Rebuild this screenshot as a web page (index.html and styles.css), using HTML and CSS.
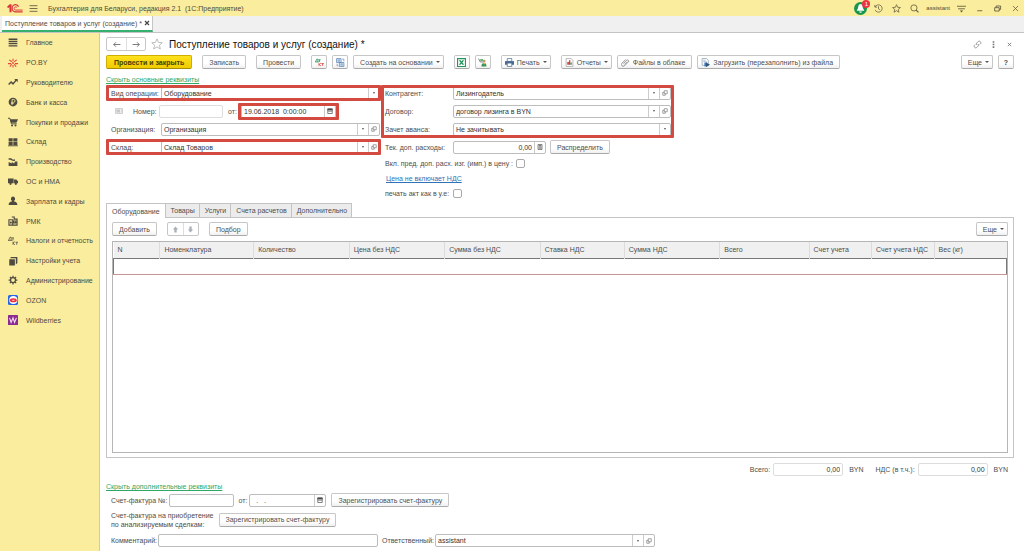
FILE: index.html
```
<!DOCTYPE html>
<html lang="ru">
<head>
  <meta charset="UTF-8" />
  <meta name="viewport" content="width=device-width, initial-scale=1.0" />
  <title>Поступление товаров и услуг (создание)</title>
  <link rel="stylesheet" href="styles.css">
</head>
<body>
  <!-- shared icons -->
  <svg class="sprite" aria-hidden="true">
    <symbol id="open" viewBox="0 0 12 12"><path d="M4.500 1.500h6v6h-6zM4.500 4.500H1.500v6h5V7.500" fill="none" stroke="currentColor" stroke-width="1"/></symbol>
    <symbol id="calendar" viewBox="0 0 12 12"><path d="M1.500 2h9v9h-9z" fill="none" stroke="currentColor" stroke-width="1.400"/><path d="M1 1h10v4H1zM3 6.500h1.500V8H3zM5.300 6.500h1.500V8H5.300zM7.600 6.500h1.500V8H7.600z" fill="currentColor"/></symbol>
    <symbol id="calc" viewBox="0 0 12 12"><path d="M2 1h8v10H2z" fill="none" stroke="currentColor" stroke-width="1.300"/><path d="M3.500 2.500h5V5h-5zM3.500 6h1.300v1.300H3.500zM5.500 6h1.300v1.300H5.500zM7.400 6h1.300v1.300H7.400zM3.500 8.200h1.300v1.300H3.500zM5.500 8.200h1.300v1.300H5.500zM7.400 8.200h1.300v1.300H7.400z" fill="currentColor"/></symbol>
  </svg>

  <header class="topbar">
    <svg class="logo" viewBox="0 0 46 26" aria-label="1С">
      <path d="M0 8l8-7h5v23H7V9l-4 3z" fill="#d9363a"/>
      <path d="M33 8c-1-4-5-6-8-6a10 10 0 0 0 0 21h20" fill="none" stroke="#d9363a" stroke-width="3.600"/>
      <path d="M28.500 10a4.500 4.500 0 1 0-3.500 7.500h20" fill="none" stroke="#d9363a" stroke-width="2.800"/>
    </svg>
    <button class="plain" aria-label="Меню"><svg class="ico" viewBox="0 0 16 16"><path d="M1 3h14M1 8h14M1 13h14" stroke="#5d563a" stroke-width="1.500"/></svg></button>
    <span class="app-name">Бухгалтерия для Беларуси, редакция 2.1 &nbsp;(1С:Предприятие)</span>
    <div class="top-tools">
      <button class="plain bell" aria-label="Уведомления"><svg viewBox="0 0 24 24"><circle cx="12" cy="12" r="12" fill="#18964d"/><path d="M12 4c-4 0-4 4-4.500 7L5 16h14l-2.500-5C16 8 16 4 12 4zM9.500 17.500h5a2.500 2.500 0 0 1-5 0z" fill="#fff"/></svg><span class="badge">1</span></button>
      <button class="plain" aria-label="История"><svg class="ico" viewBox="0 0 16 16"><path d="M2.200 5A6.500 6.500 0 1 1 2 10.500M1.500 1.500V5.500h4M8 4v4.500l3 2" fill="none" stroke="#5d563a" stroke-width="1.300"/></svg></button>
      <button class="plain" aria-label="Избранное"><svg class="ico" viewBox="0 0 16 16"><path d="M8 1.200l2 4.700 5 .4-3.800 3.300 1.200 5L8 11.900l-4.400 2.700 1.200-5L1 6.300l5-.4z" fill="none" stroke="#5d563a" stroke-width="1.300"/></svg></button>
      <button class="plain" aria-label="Поиск"><svg class="ico" viewBox="0 0 16 16"><circle cx="7" cy="7" r="5.500" fill="none" stroke="#5d563a" stroke-width="1.400"/><path d="M11 11l4 4" stroke="#5d563a" stroke-width="1.800"/></svg></button>
      <span class="user">assistant</span>
      <button class="plain" aria-label="Настройки"><svg class="ico" viewBox="0 0 16 16"><path d="M0 4h16M2 8.500h12" stroke="#5d563a" stroke-width="1.500"/><path d="M5 11.500h6L8 15z" fill="#5d563a"/></svg></button>
      <button class="plain" aria-label="Свернуть"><svg class="ico" viewBox="0 0 16 16"><path d="M4 12h9" stroke="#5d563a" stroke-width="1.500"/></svg></button>
      <button class="plain" aria-label="Развернуть"><svg class="ico" viewBox="0 0 16 16"><path d="M3 6.500h8v6H3zM5.500 6V3.500h8v6H11" fill="none" stroke="#5d563a" stroke-width="1.500"/></svg></button>
      <button class="plain" aria-label="Закрыть"><svg class="ico" viewBox="0 0 16 16"><path d="M3.500 3.500l9 9M12.500 3.500l-9 9" stroke="#5d563a" stroke-width="1.300"/></svg></button>
    </div>
  </header>

  <div class="window-tabs">
    <div class="window-tab">
      <span>Поступление товаров и услуг (создание) *</span>
      <button class="plain" aria-label="Закрыть вкладку"><svg viewBox="0 0 8 8"><path d="M2 2l4 4M6 2L2 6" stroke="#444" stroke-width="1.200"/></svg></button>
    </div>
  </div>

  <div class="workspace">
    <nav class="sidebar">
      <ul>
        <li><a href="#"><svg viewBox="0 0 16 16"><path d="M1 2h14M1 5.500h14M1 9h14M1 12.500h14" stroke="#4d4a40" stroke-width="2.200"/></svg>Главное</a></li>
        <li><a href="#"><svg viewBox="0 0 16 16"><path d="M8 1v4M8 11v4M2 3l4 3M14 3l-4 3M0 9h5M11 9h5M3 14l3-4M13 14l-3-4" stroke="#e0453a" stroke-width="1.700"/><circle cx="8" cy="8" r="1.500" fill="#e0453a"/></svg>PO.BY</a></li>
        <li><a href="#"><svg viewBox="0 0 16 16"><path d="M1 12l4-4 3 3 5-6" fill="none" stroke="#4d4a40" stroke-width="2.300"/><path d="M10 3h5.500v5.500z" fill="#4d4a40"/></svg>Руководителю</a></li>
        <li><a href="#"><svg viewBox="0 0 16 16"><circle cx="8" cy="8" r="7" fill="#4d4a40"/><path d="M6.500 13V4h2.500a2.200 2.200 0 0 1 0 4.500H5M5 10.500h4" fill="none" stroke="#fbed9e" stroke-width="1.300"/></svg>Банк и касса</a></li>
        <li><a href="#"><svg viewBox="0 0 16 16"><path d="M0 2h3l2.500 9H14" fill="none" stroke="#4d4a40" stroke-width="1.600"/><path d="M3.500 3.500H16L13.500 9H5z" fill="#4d4a40"/><circle cx="6.500" cy="13.500" r="1.600" fill="#4d4a40"/><circle cx="12" cy="13.500" r="1.600" fill="#4d4a40"/></svg>Покупки и продажи</a></li>
        <li><a href="#"><svg viewBox="0 0 16 16"><path d="M1 2h6.500v5H1zM8.500 2H15v5H8.500zM1 8h6.500v5H1zM8.500 8H15v5H8.500zM0 13.500h16v1.200H0z" fill="#4d4a40"/></svg>Склад</a></li>
        <li><a href="#"><svg viewBox="0 0 16 16"><path d="M1 14.500V8l5 2.500V8l4 2.500L11 7h4v7.500zM1 2h4l3 2.500 3-1v3L7 6 4 4.500H1z" fill="#4d4a40"/></svg>Производство</a></li>
        <li><a href="#"><svg viewBox="0 0 16 16"><path d="M0 4h9v7.500H0zM9.700 5.500h3.500L16 8.500v3H9.700z" fill="#4d4a40"/><circle cx="4" cy="12.500" r="1.800" fill="#4d4a40"/><circle cx="12.500" cy="12.500" r="1.800" fill="#4d4a40"/></svg>ОС и НМА</a></li>
        <li><a href="#"><svg viewBox="0 0 16 16"><path d="M8 1a3.200 3.500 0 0 1 1.800 6.500v1.300c3 .7 5.200 1.500 5.200 5.700H1c0-4.200 2.200-5 5.200-5.700V7.500A3.200 3.500 0 0 1 8 1z" fill="#4d4a40"/></svg>Зарплата и кадры</a></li>
        <li><a href="#"><svg viewBox="0 0 16 16"><path d="M1.500 6h6v8.500h-6zM6 1.500h4V6M9 5h5.500v9.500H7.500M9 8h3.500v3H9z" fill="none" stroke="#4d4a40" stroke-width="1.800"/><path d="M3 9h3v3H3z" fill="#4d4a40"/></svg>РМК</a></li>
        <li><a href="#"><svg viewBox="0 0 16 16"><path d="M1 7l2-5h2v5M0 7h7M6 3h3.500M8 3v4M8 9v5M11 9l-3 2.500L11 14M12 10h4M14 10v4" fill="none" stroke="#4d4a40" stroke-width="1.200"/></svg>Налоги и отчетность</a></li>
        <li><a href="#"><svg viewBox="0 0 16 16"><path d="M2 5h9v10H2zM3 3.500L5 1.500h10V11l-2.500 2.500v-10z" fill="#4d4a40"/></svg>Настройки учета</a></li>
        <li><a href="#"><svg viewBox="0 0 16 16"><circle cx="8" cy="8" r="4" fill="none" stroke="#4d4a40" stroke-width="2"/><path d="M8 1v3M8 12v3M1 8h3M12 8h3M3 3l2 2M11 11l2 2M13 3l-2 2M5 11l-2 2" stroke="#4d4a40" stroke-width="2"/></svg>Администрирование</a></li>
        <li><a href="#"><svg viewBox="0 0 16 16"><rect width="16" height="16" rx="2.500" fill="#2566e8"/><circle cx="8.500" cy="8" r="6.500" fill="#fff"/><ellipse cx="8.500" cy="8.500" rx="5.500" ry="3.200" fill="#ee2b3b"/><path d="M6.500 8.500h4" stroke="#fff" stroke-width="1.200"/></svg>OZON</a></li>
        <li><a href="#"><svg viewBox="0 0 16 16"><rect width="16" height="16" rx="1" fill="#8b2a8f"/><path d="M2.500 4.500L5 12l3-7.500 2.500 7.500 3-7.500" fill="none" stroke="#f3dcf3" stroke-width="1.700"/></svg>Wildberries</a></li>
      </ul>
    </nav>

    <main>
      <div class="title-row">
        <div class="pair">
          <button aria-label="Назад"><svg viewBox="0 0 16 12"><path d="M15 6H3M7 2L3 6l4 4" fill="none" stroke="#777" stroke-width="1.700"/></svg></button>
          <button aria-label="Вперед"><svg viewBox="0 0 16 12"><path d="M1 6h12M9 2l4 4-4 4" fill="none" stroke="#777" stroke-width="1.700"/></svg></button>
        </div>
        <svg class="star" viewBox="0 0 16 16"><path d="M8 1.200l2 4.700 5 .4-3.800 3.300 1.200 5L8 11.900l-4.400 2.700 1.200-5L1 6.300l5-.4z" fill="none" stroke="#aaa" stroke-width="1"/></svg>
        <h1>Поступление товаров и услуг (создание) *</h1>
        <div class="title-tools">
          <button class="plain" aria-label="Ссылка"><svg class="ico" viewBox="0 0 16 16"><path d="M7 9a3 3 0 0 1 0-4l2.500-2.500a2.900 2.900 0 0 1 4 4L12 8M9 7a3 3 0 0 1 0 4l-2.500 2.500a2.900 2.900 0 0 1-4-4L4 8" fill="none" stroke="#777" stroke-width="1.300"/></svg></button>
          <button class="plain" aria-label="Действия"><svg class="ico" viewBox="0 0 16 16"><path d="M6.500 2h3v3h-3zM6.500 6.500h3v3h-3zM6.500 11h3v3h-3z" fill="#777"/></svg></button>
          <button class="plain" aria-label="Закрыть"><svg class="ico" viewBox="0 0 16 16"><path d="M5 5l6 6M11 5l-6 6" stroke="#777" stroke-width="1.500"/></svg></button>
        </div>
      </div>

      <div class="commands">
        <button class="btn primary">Провести и закрыть</button>
        <button class="btn">Записать</button>
        <button class="btn">Провести</button>
        <div class="group">
          <button class="btn icon" aria-label="Проводки"><svg viewBox="0 0 16 16"><path d="M1 7l2-5h2v5M0 7h7M6 3h4M8 3v4" fill="none" stroke="#25915a" stroke-width="1.400"/><path d="M7 9v5M10.500 9L7.500 11.500l3 2.500M11 10h5M13.500 10v4" fill="none" stroke="#d9413a" stroke-width="1.400"/></svg></button>
          <button class="btn icon" aria-label="Структура подчиненности"><svg viewBox="0 0 16 16"><path d="M1 1h8v7H1zM6 8h8v7H6z" fill="#dce8f5" stroke="#5b83b5" stroke-width="1.300"/><path d="M3 3.500h4M3 5.500h4M8 10.500h4M8 12.500h4M11 2h3v4M2 10v4h2" fill="none" stroke="#5b83b5" stroke-width="1.200"/></svg></button>
          <button class="btn">Создать на основании<i class="caret"></i></button>
        </div>
        <div class="group">
          <button class="btn icon" aria-label="Excel"><svg viewBox="0 0 16 16"><path d="M1 1h14v14H1z" fill="#fff" stroke="#23945a" stroke-width="2"/><path d="M4.500 4l7 8M11.500 4l-7 8" stroke="#23945a" stroke-width="2.200"/></svg></button>
          <button class="btn icon" aria-label="Подбор контрагента"><svg viewBox="0 0 16 16"><path d="M1 1l3 6h7" fill="none" stroke="#555" stroke-width="1.300"/><path d="M4 2h5v3H4z" fill="#4aa564"/><circle cx="11" cy="5.500" r="2.500" fill="#c79a5b"/><path d="M6 15c0-4 2-6 5-6s4 2 4 6z" fill="#35965a"/><path d="M9 9l2 3 2-3z" fill="#e2b94f"/></svg></button>
        </div>
        <button class="btn"><svg viewBox="0 0 16 16"><path d="M4 1h8v5H4z" fill="#fff" stroke="#4a6a93" stroke-width="1.300"/><path d="M0 5.500h16V12H0z" fill="#4a6a93"/><path d="M4 9h8v6H4z" fill="#fff" stroke="#4a6a93" stroke-width="1.300"/></svg>Печать<i class="caret"></i></button>
        <div class="group">
          <button class="btn"><svg viewBox="0 0 16 16"><path d="M2 1h9l3 3v11H2z" fill="#fff" stroke="#999" stroke-width="1.200"/><path d="M4 7h3v5H4z" fill="#d9413a"/><path d="M7 4h2.500v8H7z" fill="#d9413a"/><path d="M9.500 8h2.500v4H9.500z" fill="#23945a"/></svg>Отчеты<i class="caret"></i></button>
          <button class="btn"><svg viewBox="0 0 16 16"><path d="M4 10l6-6a2 2 0 0 1 3 3l-7 7a3.200 3.200 0 0 1-4.500-4.500L8.500 2.500M6 11.500l5-5" fill="none" stroke="#777" stroke-width="1.300"/></svg>Файлы в облаке</button>
          <button class="btn"><svg viewBox="0 0 16 16"><path d="M2 1h8l3 3v9H2z" fill="#fff" stroke="#7d93ad" stroke-width="1.200"/><path d="M4 4h4M4 6.500h6" stroke="#7d93ad"/><path d="M6 8h5v7H6z" fill="#3979bd"/><path d="M9 8l7 4-7 4z" fill="#31547d"/></svg>Загрузить (перезаполнить) из файла</button>
        </div>
        <div class="group end">
          <button class="btn more">Еще<i class="caret"></i></button>
          <button class="btn icon help">?</button>
        </div>
      </div>

      <a href="#" class="toggle">Скрыть основные реквизиты</a>

      <div class="form">
        <div class="col">
          <div class="row marked">
            <label for="op">Вид операции:</label>
            <div class="field grow"><input id="op" type="text" value="Оборудование"><button aria-label="Выбрать"><i class="caret"></i></button></div>
          </div>
          <div class="row number-row">
            <svg class="note" viewBox="0 0 16 12"><path d="M1 1h14v10H1z" fill="#eee" stroke="#aaa"/><path d="M3 4h7M3 6h7M3 8h7M12 4h1M12 6h1M12 8h1" stroke="#999"/></svg>
            <label for="num">Номер:</label>
            <div class="field soft grow"><input id="num" type="text"></div>
            <label for="date">от:</label>
            <div class="marked date-mark">
              <div class="field"><input id="date" type="text" value="19.06.2018  0:00:00"><button aria-label="Календарь"><svg><use href="#calendar"/></svg></button></div>
            </div>
          </div>
          <div class="row">
            <label for="org">Организация:</label>
            <div class="field grow"><input id="org" type="text" value="Организация"><button aria-label="Выбрать"><i class="caret"></i></button><button aria-label="Открыть"><svg><use href="#open"/></svg></button></div>
          </div>
          <div class="row marked">
            <label for="store">Склад:</label>
            <div class="field grow"><input id="store" type="text" value="Склад Товаров"><button aria-label="Выбрать"><i class="caret"></i></button><button aria-label="Открыть"><svg><use href="#open"/></svg></button></div>
          </div>
        </div>

        <div class="col right">
          <div class="marked tall">
            <div class="row">
              <label for="partner">Контрагент:</label>
              <div class="field grow"><input id="partner" type="text" value="Лизингодатель"><button aria-label="Выбрать"><i class="caret"></i></button><button aria-label="Открыть"><svg><use href="#open"/></svg></button></div>
            </div>
            <div class="row">
              <label for="contract">Договор:</label>
              <div class="field grow"><input id="contract" type="text" value="договор лизинга в BYN"><button aria-label="Выбрать"><i class="caret"></i></button><button aria-label="Открыть"><svg><use href="#open"/></svg></button></div>
            </div>
            <div class="row">
              <label for="advance">Зачет аванса:</label>
              <div class="field grow"><input id="advance" type="text" value="Не зачитывать"><button aria-label="Выбрать"><i class="caret"></i></button></div>
            </div>
          </div>
          <div class="row">
            <label for="extra">Тек. доп. расходы:</label>
            <div class="field sum"><input id="extra" type="text" value="0,00"><button aria-label="Калькулятор"><svg><use href="#calc"/></svg></button></div>
            <button class="btn">Распределить</button>
          </div>
          <div class="row check"><label for="incl">Вкл. пред. доп. расх. изг. (имп.) в цену :</label><input id="incl" type="checkbox"></div>
          <div class="row check"><a href="#" class="vat">Цена не включает НДС</a></div>
          <div class="row check"><label for="act">печать акт как в у.е:</label><input id="act" type="checkbox"></div>
        </div>
      </div>

      <div class="tabs">
        <button class="active">Оборудование</button>
        <button>Товары</button>
        <button>Услуги</button>
        <button>Счета расчетов</button>
        <button>Дополнительно</button>
      </div>
      <section class="panel">
        <div class="panel-tools">
          <button class="btn">Добавить</button>
          <div class="pair small">
            <button aria-label="Вверх"><svg viewBox="0 0 12 12"><path d="M6 1l4.500 5H8v5H4V6H1.500z" fill="#a9b0b8"/></svg></button>
            <button aria-label="Вниз"><svg viewBox="0 0 12 12"><path d="M6 11L1.500 6H4V1h4v5h2.500z" fill="#a9b0b8"/></svg></button>
          </div>
          <button class="btn">Подбор</button>
          <button class="btn more end">Еще<i class="caret"></i></button>
        </div>
        <div class="table-box">
          <table>
            <colgroup>
              <col class="c-n"><col class="c-name"><col class="c-wide"><col class="c-wide"><col class="c-wide"><col class="c-rate"><col class="c-wide"><col class="c-total"><col class="c-acc"><col class="c-acc"><col>
            </colgroup>
            <thead>
              <tr><th>N</th><th>Номенклатура</th><th>Количество</th><th>Цена без НДС</th><th>Сумма без НДС</th><th>Ставка НДС</th><th>Сумма НДС</th><th>Всего</th><th>Счет учета</th><th>Счет учета НДС</th><th>Вес (кг)</th></tr>
            </thead>
            <tbody>
              <tr><td colspan="11"></td></tr>
            </tbody>
          </table>
        </div>
      </section>

      <div class="totals">
        <label for="total">Всего:</label>
        <div class="field soft"><input id="total" type="text" value="0,00" readonly></div>
        <span class="cur">BYN</span>
        <label for="vat">НДС (в т.ч.):</label>
        <div class="field soft"><input id="vat" type="text" value="0,00" readonly></div>
        <span class="cur">BYN</span>
      </div>

      <a href="#" class="toggle">Скрыть дополнительные реквизиты</a>

      <div class="bottom">
        <div class="row">
          <label for="inv">Счет-фактура №:</label>
          <div class="field inv"><input id="inv" type="text"></div>
          <label for="invdate">от:</label>
          <div class="field invdate"><input id="invdate" type="text" value="  .   ."><button aria-label="Календарь"><svg><use href="#calendar"/></svg></button></div>
          <button class="btn">Зарегистрировать счет-фактуру</button>
        </div>
        <div class="row deals">
          <span>Счет-фактура на приобретение<br>по анализируемым сделкам:</span>
          <button class="btn">Зарегистрировать счет-фактуру</button>
        </div>
        <div class="row last">
          <label for="comment">Комментарий:</label>
          <div class="field comment"><input id="comment" type="text"></div>
          <label for="resp">Ответственный:</label>
          <div class="field comment"><input id="resp" type="text" value="assistant"><button aria-label="Выбрать"><i class="caret"></i></button><button aria-label="Открыть"><svg><use href="#open"/></svg></button></div>
        </div>
      </div>
    </main>
  </div>
</body>
</html>
```
FILE: styles.css
```
* {
  box-sizing: border-box;
  margin: 0;
  padding: 0;
}
body {
  min-height: 100vh;
  display: flex;
  flex-direction: column;
  background: #fff;
  color: #4d4d4d;
  font-family: "Liberation Sans", Arial, sans-serif;
  font-size: 7px;
  line-height: 9px;
}
button, input {
  font: inherit;
  color: inherit;
}
button {
  cursor: pointer;
}
svg {
  display: block;
  flex: none;
}
.sprite {
  display: none;
}
.plain {
  display: flex;
  border: 0;
  background: none;
}
.ico {
  width: 9px;
  height: 9px;
}
.caret {
  display: inline-block;
  border: 2px solid transparent;
  border-top-color: #555;
  border-bottom: 0;
}

/* top bar */
.topbar {
  display: flex;
  align-items: center;
  height: 16px;
  padding: 0 4px 0 7px;
  background: #fbed9e;
  color: #4f4a36;
}
.logo {
  width: 16px;
  height: 9px;
  margin-right: 6px;
}
.app-name {
  margin-left: 10px;
}
.top-tools {
  display: flex;
  align-items: center;
  gap: 9px;
  margin-left: auto;
}
.bell {
  position: relative;
  margin-right: -2px;
}
.bell svg {
  width: 13px;
  height: 13px;
}
.badge {
  position: absolute;
  top: -2px;
  right: -3px;
  width: 8px;
  height: 8px;
  border-radius: 50%;
  background: #ef3340;
  color: #fff;
  font-size: 6px;
  line-height: 8px;
  text-align: center;
}
.user {
  font-size: 6px;
  margin: 0 -2px;
}

/* open windows */
.window-tabs {
  display: flex;
  height: 17px;
  background: #f0f0f0;
  border-bottom: 1px solid #c4c4c4;
}
.window-tab {
  display: flex;
  align-items: center;
  gap: 1px;
  padding: 0 1px 0 3px;
  margin-left: 2px;
  background: #fff;
  border-right: 1px solid #c4c4c4;
  border-bottom: 2px solid #35b06f;
}
.window-tab svg {
  width: 8px;
  height: 8px;
}

.workspace {
  flex: 1;
  display: flex;
}

/* sections */
.sidebar {
  flex: none;
  width: 100px;
  background: #fbed9e;
  border-right: 1px solid #d6cc98;
}
.sidebar ul {
  display: flex;
  flex-direction: column;
  height: 297px;
  list-style: none;
}
.sidebar li {
  flex: 1;
  display: flex;
}
.sidebar a {
  display: flex;
  align-items: center;
  gap: 8px;
  padding-left: 8px;
  color: #4d4a40;
  text-decoration: none;
}
.sidebar svg {
  width: 10px;
  height: 10px;
}

main {
  flex: 1;
  min-width: 0;
  display: flex;
  flex-direction: column;
  padding: 4px 10px 0 6px;
}

/* title */
.title-row {
  display: flex;
  align-items: center;
  height: 14px;
}
.pair {
  display: flex;
  height: 14px;
  border: 1px solid #c6c6c6;
  border-radius: 2px;
}
.pair button {
  display: flex;
  align-items: center;
  justify-content: center;
  width: 19px;
  border: 0;
  background: none;
}
.pair button + button {
  border-left: 1px solid #ddd;
}
.pair svg {
  width: 9px;
  height: 7px;
}
.star {
  width: 12px;
  height: 12px;
  margin: 0 6px 0 5px;
}
h1 {
  font-size: 10px;
  font-weight: normal;
  color: #111;
}
.title-tools {
  display: flex;
  gap: 7px;
  margin-left: auto;
}

/* buttons */
.btn {
  display: flex;
  align-items: center;
  justify-content: center;
  gap: 3px;
  height: 14px;
  padding: 0 6px;
  border: 1px solid #c6c6c6;
  border-bottom-color: #aaa;
  border-radius: 2px;
  background: linear-gradient(#fff 60%, #f0f0f0);
  white-space: nowrap;
}
.btn svg {
  width: 9px;
  height: 9px;
}
.btn:has(.caret) {
  padding-right: 3px;
}
.btn:has(svg) {
  padding-left: 3px;
}
.btn.icon {
  width: 16px;
  padding: 0;
}
.btn.primary {
  padding: 0 7px;
  background: linear-gradient(#ffe11e, #f0cb00);
  border-color: #cfae00;
  border-bottom-color: #a88d00;
  color: #4a4000;
  font-weight: bold;
}
.help {
  font-weight: bold;
}
.commands {
  display: flex;
  gap: 10px;
  margin-top: 4px;
}
.group {
  display: flex;
  gap: 5px;
}
.end {
  margin-left: auto;
}

.toggle {
  align-self: flex-start;
  margin-top: 6px;
  color: #2fa765;
}

/* fields */
.row {
  display: flex;
  align-items: center;
  height: 18px;
}
.field {
  display: flex;
  height: 13px;
  border: 1px solid #bdbdbd;
  border-radius: 2px;
  background: #fff;
}
.field input {
  flex: 1;
  width: 0;
  min-width: 0;
  padding: 0 2px;
  border: 0;
  outline: 0;
  background: none;
  color: #333;
  white-space: pre;
}
.field button {
  display: flex;
  align-items: center;
  justify-content: center;
  width: 11px;
  border: 0;
  border-left: 1px solid #ccc;
  background: none;
}
.field svg {
  width: 6px;
  height: 6px;
}
.field .caret {
  border-width: 1px;
  border-bottom: 0;
  border-top-width: 2px;
}
.soft {
  border-color: #ddd;
}
.grow {
  flex: 1;
}
.form {
  display: grid;
  grid-template-columns: 274fr 291fr 343fr;
}
.col {
  padding-left: 5px;
}
.col > .row > label:first-child {
  width: 50px;
}
.col .number-row {
  padding-right: 44px;
}
.note {
  width: 8px;
  height: 6px;
  margin: 0 10px 0 4px;
}
.number-row label {
  margin-right: 2px;
}
.number-row .field + label {
  margin: 0 4px 0 5px;
}
.date-mark {
  width: 95px;
}
.right {
  padding-left: 5px;
}
.right .row > label:first-child {
  width: 68px;
}
.sum {
  width: 93px;
  margin-right: 4px;
}
.sum input,
.totals input {
  text-align: right;
}
.row.check {
  height: 15px;
  gap: 3px;
}
.right .row.check > label:first-child {
  width: auto;
  min-width: 65px;
}
.check input {
  appearance: none;
  width: 9px;
  height: 9px;
  border: 1px solid #aaa;
  border-radius: 2px;
}
.vat {
  color: #2f72b8;
  margin-left: 1px;
}

/* red frames around the fields to fill in */
.marked {
  position: relative;
}
.marked::after {
  content: "";
  position: absolute;
  inset: 1px -1px 1px -5px;
  border: 3px solid #d34b40;
  border-radius: 1px;
  pointer-events: none;
}
.date-mark::after {
  inset: -2px -3px;
}
.tall::after {
  inset: 1px -3px 0 -4px;
}

/* document tabs */
.tabs {
  display: flex;
  margin-top: 2px;
}
.tabs button {
  height: 14px;
  padding: 0 4px 0 5px;
  border: 1px solid #c4c4c4;
  border-left-width: 0;
  border-bottom: 0;
  background: #ececec;
}
.tabs .active {
  position: relative;
  height: 15px;
  margin-bottom: -1px;
  padding: 0 5px;
  border-left-width: 1px;
  background: #fff;
}
.panel {
  flex: 1;
  display: flex;
  flex-direction: column;
  padding: 4px 5px;
  border: 1px solid #c4c4c4;
}
.panel-tools {
  display: flex;
  gap: 10px;
  margin-bottom: 5px;
}
.small button {
  width: 15px;
}
.table-box {
  flex: 1;
  border: 1px solid #b5b5b5;
}
table {
  width: 100%;
  table-layout: fixed;
  border-collapse: collapse;
}
th {
  height: 16px;
  padding: 0 4px;
  background: #f0f0f0;
  border-right: 1px solid #dcdcdc;
  font-weight: normal;
  text-align: left;
  white-space: nowrap;
}
th:last-child {
  border-right: 0;
}
td {
  height: 16px;
  border: 1px solid #777;
  border-bottom-color: #c99494;
}
.c-n { width: 5.2%; }
.c-name { width: 10.5%; }
.c-wide { width: 10.7%; }
.c-rate { width: 9.4%; }
.c-total { width: 10%; }
.c-acc { width: 7%; }

.totals {
  display: flex;
  align-items: center;
  justify-content: flex-end;
  margin-top: 5px;
  padding-right: 6px;
}
.totals .field {
  width: 70px;
  margin: 0 6px 0 3px;
}
.cur + label {
  margin-left: 12px;
}

/* additional details */
.bottom {
  padding-left: 5px;
}
.inv {
  width: 65px;
  margin: 0 5px 0 1px;
}
.invdate {
  width: 77px;
  margin: 0 5px 0 2px;
}
.deals {
  height: 21px;
  gap: 5px;
}
.last {
  height: 21px;
}
.comment {
  width: 220px;
  margin: 0 4px 0 1px;
}
```
